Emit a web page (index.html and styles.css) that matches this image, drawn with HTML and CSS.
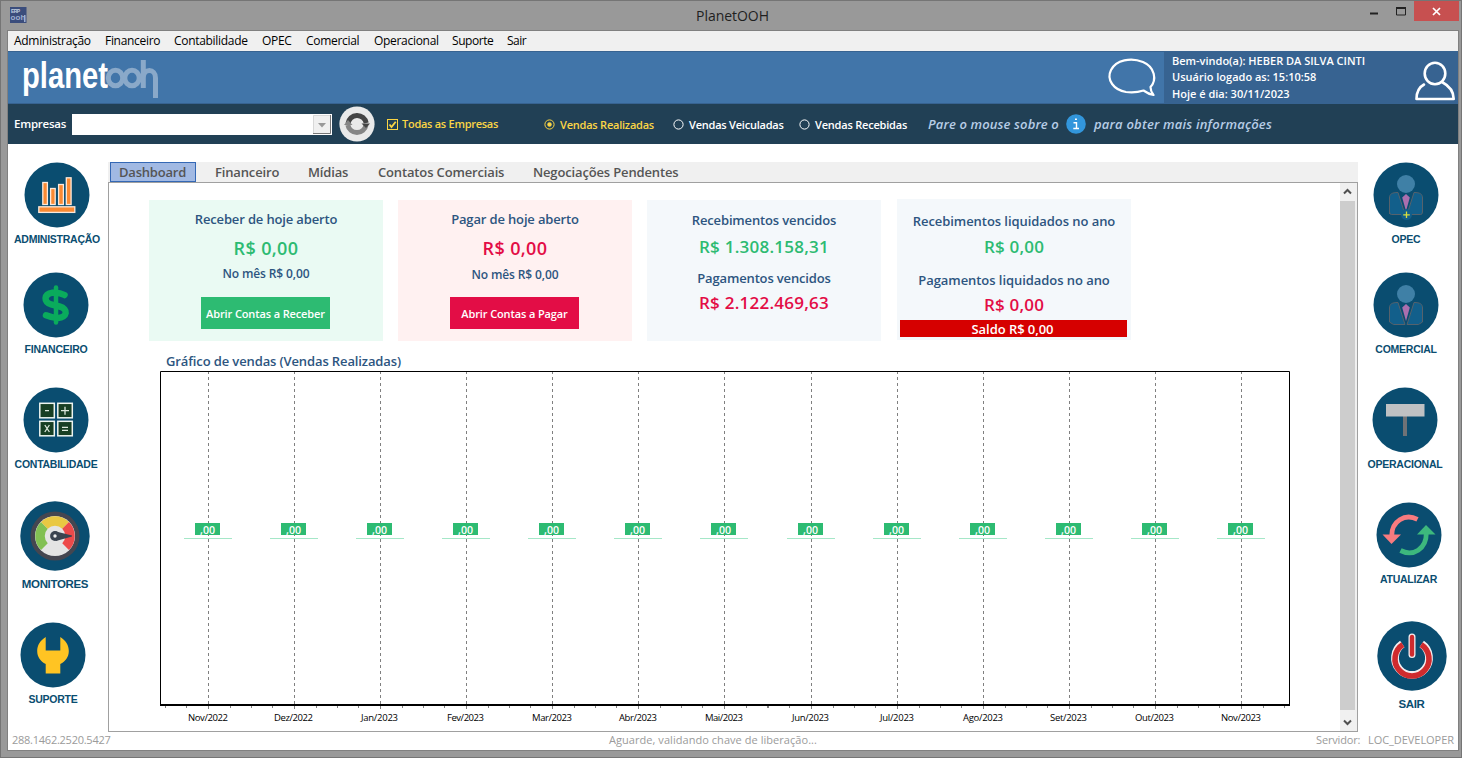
FILE: index.html
```html
<!DOCTYPE html>
<html lang="pt-BR">
<head>
<meta charset="utf-8">
<title>PlanetOOH</title>
<link rel="stylesheet" href="styles.css">
</head>
<body>
<div class="window">
  <header class="titlebar">
    <svg class="app-icon" width="17" height="16"><rect width="16.5" height="16" fill="#3b4d7c"/><text class="t-icon-top" x="1" y="6" textLength="9">ERP</text><text class="t-icon" x="0.5" y="12.5" textLength="15">ooh</text><rect x="14" y="8" width="1.5" height="7" fill="#9fb0d0"/></svg>
    <span class="title">PlanetOOH</span>
    <svg class="controls" width="90" height="21"><rect x="45" width="45" height="20" fill="#c75050"/><path d="M1 12.5h8" stroke="#222" stroke-width="2"/><path d="M27.5 7v7h9v-7" fill="none" stroke="#222"/><path d="M27 7h10" stroke="#222" stroke-width="2"/><path d="M64 7l7 7M71 7l-7 7" stroke="#fff" stroke-width="1.7"/></svg>
  </header>
  <div class="client">
    <nav class="menu"><span class="m1">Administração</span><span class="m2">Financeiro</span><span class="m3">Contabilidade</span><span class="m4">OPEC</span><span class="m5">Comercial</span><span class="m6">Operacional</span><span class="m7">Suporte</span><span class="m8">Sair</span></nav>
    <div class="brandbar">
      <svg class="logo" width="150" height="52"><text class="t-planet" x="14" y="35.5" textLength="86" lengthAdjust="spacingAndGlyphs">planet</text><g fill="none" stroke="#8aa9c9" stroke-width="5"><ellipse cx="107.5" cy="26" rx="7.2" ry="7.7"/><ellipse cx="124" cy="26" rx="7.2" ry="7.7"/><path d="M135.3 8v28M135.3 26c0-10 12.2-10 12.2 0v20"/></g></svg>
      <svg class="chat" width="52" height="48"><path d="M44.5 34C51 27 49 14 37 9C25 4 10 7 5 17C0 27 8 37 20 39C28 40 33 39 37.500 37.500C41 40 44 41.500 47.500 42C45.500 39.500 44.500 37 44.500 34Z" fill="none" stroke="#fff" stroke-width="2.200" stroke-linejoin="round"/></svg>
      <div class="user">
        <div class="user-text"><span class="u1">Bem-vindo(a): HEBER DA SILVA CINTI</span><span class="u2">Usuário logado as: 15:10:58</span><span class="u3">Hoje é dia: 30/11/2023</span></div>
        <svg width="44" height="48"><g fill="none" stroke="#fff" stroke-width="2.600" stroke-linecap="round" stroke-linejoin="round"><ellipse cx="22" cy="18.500" rx="10.300" ry="10.800"/><path d="M11 29.500C5.500 32.500 3.500 38 3.500 44H40.700C40.700 36.500 37.500 31.500 29 27"/></g></svg>
      </div>
    </div>
    <div class="filterbar">
      <span class="emp">Empresas</span>
      <div class="combo"><svg width="18" height="19"><rect width="18" height="19" fill="#f0f0f0"/><path d="M.5 18V.5H17" fill="none" stroke="#d8d8d8"/><path d="M0 18.500H17.500V0" fill="none" stroke="#777"/><path d="M5 8h8l-4 4.500z" fill="#999"/></svg></div>
      <svg class="reload" width="36" height="36"><circle cx="18" cy="18" r="17.600" fill="#e9e9e9"/><g fill="none" stroke-width="5"><path d="M9 17.500A9.200 9.200 0 0 1 27.200 17" stroke="#444"/><path d="M27 19A9.200 9.200 0 0 1 8.900 19" stroke="#858585"/></g><path d="M22.500 17.500H31L27 22Z" fill="#444"/><path d="M5 19H13.500L9 14Z" fill="#858585"/></svg>
      <svg class="check" width="11" height="11"><rect x=".5" y=".5" width="10" height="10" fill="none" stroke="#fad545"/><path d="M2.500 5.500L4.500 8L8.700 2.700" fill="none" stroke="#fad545" stroke-width="1.800"/></svg>
      <span class="todas">Todas as Empresas</span>
      <svg class="radio r1" width="11" height="11"><circle cx="5.500" cy="5.500" r="4.600" fill="none" stroke="#fad545"/><circle cx="5.500" cy="5.500" r="2.200" fill="#fad545"/></svg><span class="sale s1">Vendas Realizadas</span>
      <svg class="radio r2" width="11" height="11"><circle cx="5.500" cy="5.500" r="4.600" fill="none" stroke="#fff"/></svg><span class="sale s2">Vendas Veiculadas</span>
      <svg class="radio r3" width="11" height="11"><circle cx="5.500" cy="5.500" r="4.600" fill="none" stroke="#fff"/></svg><span class="sale s3">Vendas Recebidas</span>
      <span class="hint h1">Pare o mouse sobre o</span>
      <svg class="info" width="20" height="20"><circle cx="10" cy="10" r="9.800" fill="#3296dc"/><path d="M7.500 8.700H10.500V14.500M7.300 14.500H13M9 5.300H10.900" fill="none" stroke="#fff" stroke-width="1.400"/></svg>
      <span class="hint h2">para obter mais informações</span>
    </div>
    <div class="main">
      <aside class="side left">
        <div class="item i-adm"><svg width="66" height="66"><circle cx="33" cy="33" r="32.500"/><g fill="#fa8a33" stroke="#fbe9dc" stroke-width="1.300"><rect x="18.800" y="20.500" width="4.600" height="22"/><rect x="26.600" y="26.500" width="4.600" height="16"/><rect x="34.600" y="22.500" width="4.800" height="20"/><rect x="42.300" y="15.800" width="4.800" height="26.700"/><rect x="14.800" y="44.800" width="36" height="5.600"/></g></svg><b>ADMINISTRAÇÃO</b></div>
        <div class="item i-fin"><svg width="66" height="66"><circle cx="33" cy="33" r="32.500"/><g fill="none" stroke="#0aab5c" stroke-linecap="round"><path d="M41.500 23C37 20.500 33 20.500 29.500 20.800C20.500 22 20.500 30.500 28 32.300L36.500 34.500C46 37 44 45.500 35 46C30 46.300 27 45 23 43.300" stroke-width="6.500"/><path d="M33 15.500V50.500" stroke-width="4.500"/></g></svg><b>FINANCEIRO</b></div>
        <div class="item i-con"><svg width="66" height="66"><circle cx="33" cy="33" r="32.500"/><g fill="#173f24" stroke="#edf4f0" stroke-width="1.500"><rect x="16.800" y="16.300" width="14.500" height="14.500"/><rect x="34.800" y="16.300" width="14.500" height="14.500"/><rect x="16.800" y="34.300" width="14.500" height="14.500"/><rect x="34.800" y="34.300" width="14.500" height="14.500"/></g><path d="M22 23.700h4M38 23.700h8M42 19.700v8M21.800 38l4.600 7M26.400 38l-4.600 7M39 40.300h6M39 43.300h6" stroke="#dce8dd" stroke-width="1.300"/></svg><b>CONTABILIDADE</b></div>
        <div class="item i-mon"><svg width="70" height="70"><circle cx="35" cy="35" r="34.700"/><circle cx="35" cy="35" r="24.500" fill="#454650"/><circle cx="35" cy="35" r="20" fill="#e4e4e4"/><g fill="none" stroke-width="9.500"><path d="M24.400 45.600A15 15 0 0 1 24.400 24.400" stroke="#82c053"/><path d="M24.400 24.400A15 15 0 0 1 45.600 24.400" stroke="#e9c843"/><path d="M45.600 24.400A15 15 0 0 1 45.600 45.600" stroke="#ed4a4a"/></g><path d="M34 30L52 34.500V35.500L36 40Z" fill="#3b4450"/><circle cx="35" cy="35" r="4.900" fill="#3b4450"/><circle cx="35" cy="35" r="1.700" fill="#eee"/></svg><b>MONITORES</b></div>
        <div class="item i-sup"><svg width="66" height="66"><circle cx="33" cy="33" r="32.500"/><path d="M25.700 15V28.600H40.300V15C46 18.500 48.800 23.500 48.800 29C48.800 35 45.500 39.500 40.300 42V51.500H25.700V42C20.500 39.500 17.200 35 17.200 29C17.200 23.500 20 18.500 25.700 15Z" fill="#ffc423"/></svg><b>SUPORTE</b></div>
      </aside>
      <section class="center">
        <div class="tabs"><span class="tab on">Dashboard</span><span class="tab b2">Financeiro</span><span class="tab b3">Mídias</span><span class="tab b4">Contatos Comerciais</span><span class="tab b5">Negociações Pendentes</span></div>
        <div class="panel">
          <div class="content">
            <div class="cards">
              <div class="card green c1"><h2 class="lead">Receber de hoje aberto</h2><p class="value big pos">R$ 0,00</p><p class="month">No mês R$ 0,00</p><div class="button go">Abrir Contas a Receber</div></div>
              <div class="card red c2"><h2 class="lead">Pagar de hoje aberto</h2><p class="value big neg">R$ 0,00</p><p class="month">No mês R$ 0,00</p><div class="button pay">Abrir Contas a Pagar</div></div>
              <div class="card c3"><h2 class="lead">Recebimentos vencidos</h2><p class="value pos">R$ 1.308.158,31</p><h2 class="second">Pagamentos vencidos</h2><p class="value neg">R$ 2.122.469,63</p></div>
              <div class="card c4"><h2 class="lead">Recebimentos liquidados no ano</h2><p class="value pos wide">R$ 0,00</p><h2 class="second">Pagamentos liquidados no ano</h2><p class="value neg wide">R$ 0,00</p><div class="balance">Saldo R$ 0,00</div></div>
            </div>
            <h3 class="chart-title">Gráfico de vendas (Vendas Realizadas)</h3>
            <svg class="chart" width="1130" height="355">
              <defs>
                <g id="col"><path class="dash" d="M48.500 0V333"/><path class="tick" d="M48.500 335V338M5.500 335V337M26.500 335V337M70.500 335V337M91.500 335V337"/><path d="M24 167.500H72" stroke="#a5e7c8"/><rect x="35" y="152" width="25" height="12" fill="#2dbb72"/><text class="t-zero" x="40" y="163" textLength="15" lengthAdjust="spacingAndGlyphs">,00</text></g>
              </defs>
              <use href="#col"/><use href="#col" x="86"/><use href="#col" x="172"/><use href="#col" x="258"/><use href="#col" x="344"/><use href="#col" x="430"/><use href="#col" x="516"/><use href="#col" x="603"/><use href="#col" x="689"/><use href="#col" x="775"/><use href="#col" x="861"/><use href="#col" x="947"/><use href="#col" x="1033"/>
              <path d="M.5 334V.5H1129.500V334" fill="none" stroke="#000"/><path d="M0 334H1130" stroke="#000" stroke-width="2"/>
              <g class="t-month">
                <text x="28" y="350" textLength="40">Nov/2022</text><text x="114" y="350" textLength="39">Dez/2022</text><text x="201" y="350" textLength="37">Jan/2023</text><text x="287" y="350" textLength="37">Fev/2023</text><text x="372" y="350" textLength="40">Mar/2023</text><text x="459" y="350" textLength="38">Abr/2023</text><text x="545" y="350" textLength="38">Mai/2023</text><text x="632" y="350" textLength="37">Jun/2023</text><text x="720" y="350" textLength="34">Jul/2023</text><text x="803" y="350" textLength="40">Ago/2023</text><text x="890" y="350" textLength="37">Set/2023</text><text x="975" y="350" textLength="39">Out/2023</text><text x="1061" y="350" textLength="40">Nov/2023</text>
              </g>
            </svg>
          </div>
          <div class="scroll"><svg width="15" height="18"><path d="M4 10.500L7.500 7L11 10.500" fill="none" stroke="#505050" stroke-width="2"/></svg><div class="thumb"></div><svg width="15" height="21"><path d="M4 10.500L7.500 14L11 10.500" fill="none" stroke="#505050" stroke-width="2"/></svg></div>
        </div>
      </section>
      <aside class="side right">
        <div class="item j-ope"><svg width="66" height="66"><circle cx="33" cy="33" r="32.500"/><circle cx="33" cy="22" r="9" fill="#3f80a6"/><g fill="#125f8b" stroke="#56626c"><path d="M16.500 52V36C16.500 32 19 30.500 25 30.500L32 52.500H18.500Q16.500 52.500 16.500 50Z"/><path d="M49.500 50V36C49.500 32 47 30.500 41 30.500L34 52.500H47.500Q49.500 52.500 49.500 50Z"/></g><path d="M33 32L36.800 35.500L33 49L29.200 35.500Z" fill="#ab6fae"/><circle cx="33.500" cy="52.500" r="5.500" fill="#125f8b"/><path d="M33.500 49.500V56M30.200 52.800H36.800" stroke="#d8de3d" stroke-width="1.300"/></svg><b>OPEC</b></div>
        <div class="item j-com"><svg width="66" height="66"><circle cx="33" cy="33" r="32.500"/><circle cx="33" cy="22" r="9" fill="#3f80a6"/><g fill="#125f8b" stroke="#56626c"><path d="M16.500 50V36C16.500 32 19 30.500 25 30.500L32 52.500H20.500Z"/><path d="M49.500 50V36C49.500 32 47 30.500 41 30.500L34 52.500H45.500Z"/></g><path d="M33 32L36.800 35.500L33 49L29.200 35.500Z" fill="#ab6fae"/></svg><b>COMERCIAL</b></div>
        <div class="item j-ope2"><svg width="66" height="66"><circle cx="33" cy="33" r="32.500"/><rect x="31" y="29" width="4" height="20" fill="#6f7276"/><rect x="14" y="17" width="38.500" height="12.500" fill="#bfc1c3"/></svg><b>OPERACIONAL</b></div>
        <div class="item j-atu"><svg width="66" height="66"><circle cx="33" cy="33" r="32.500"/><g fill="none" stroke-width="4.800"><path d="M41.500 17.300C29 11 15.500 19 15.700 34" stroke="#f87b7f"/><path d="M24.500 48.500C37 55 50.500 47 50.300 31" stroke="#3db87d"/></g><path d="M6.500 32.500H25L15.500 42Z" fill="#f87b7f"/><path d="M41 32.500H59.500L50 23Z" fill="#3db87d"/></svg><b>ATUALIZAR</b></div>
        <div class="item j-sai"><svg width="70" height="70"><circle cx="35" cy="35" r="34.700"/><g fill="none" stroke-linecap="butt"><path d="M25.300 23A17 17 0 1 0 44.700 23" stroke="#f4eef0" stroke-width="7.800"/><path d="M25.800 23.700A17 17 0 1 0 44.200 23.700" stroke="#cf2b2e" stroke-width="5.600"/></g><rect x="31.500" y="12.500" width="7" height="24.500" rx="3.500" fill="#f4eef0"/><rect x="32.800" y="13.800" width="4.400" height="22" rx="2.200" fill="#cf2b2e"/></svg><b>SAIR</b></div>
      </aside>
    </div>
    <footer class="status"><span class="v1">288.1462.2520.5427</span><span class="v2">Aguarde, validando chave de liberação...</span><span class="v3">Servidor:</span><span class="v4">LOC_DEVELOPER</span></footer>
  </div>
</div>
</body>
</html>
```

FILE: styles.css
```css
* { box-sizing: border-box; }
body { margin: 0; font-family: "Open Sans", "Noto Sans", sans-serif; }
h2, h3, p { margin: 0; }
svg { display: block; flex: none; }
span, b, p, h2, h3 { white-space: nowrap; }

.window { width: 1462px; height: 758px; background: #999; border: 1px solid #757575; display: flex; flex-direction: column; }
.titlebar { height: 29px; display: flex; align-items: flex-start; padding: 0 2px 0 9px; }
.app-icon { margin-top: 6px; }
.title { width: 73px; margin-left: 669px; font-size: 14px; line-height: 29px; letter-spacing: -0.03px; color: #1f1f1f; }
.controls { margin-left: auto; }
.client { width: 1452px; height: 721px; margin-left: 6px; border: 1px solid #808080; background: #fff; display: flex; flex-direction: column; }

.menu { height: 20px; background: #f0f0f0; display: flex; gap: 14px; padding-left: 6px; font-size: 12px; line-height: 19px; letter-spacing: -0.3px; color: #000; }
.m1 { width: 77px; } .m2 { width: 55px; } .m3 { width: 74px; } .m4 { width: 30px; }
.m5 { width: 54px; } .m6 { width: 64px; } .m7 { width: 41px; letter-spacing: -0.45px; } .m8 { width: 20px; letter-spacing: -0.5px; }

.brandbar { height: 53px; background: #4175a9; border-top: 1px solid #376391; border-bottom: 1px solid #376391; display: flex; }
.chat { margin-left: 948px; margin-top: 1px; }
.user { margin: -1px 0 -1px auto; width: 294px; background: #376391; display: flex; justify-content: space-between; padding: 2px 1px 0 8px; }
.user svg { margin-top: 2px; }
.user-text { display: flex; flex-direction: column; font-size: 11px; font-weight: 600; line-height: 16.3px; color: #fff; }

.filterbar { height: 40px; background: #214055; display: flex; align-items: center; padding-left: 6px; color: #fff; font-size: 11px; font-weight: 600; }
.filterbar span { line-height: 18px; }
.emp { width: 58px; font-size: 11.5px; letter-spacing: -0.25px; }
.combo { width: 260px; height: 21px; background: #fff; display: flex; justify-content: flex-end; padding: 1px; }
.reload { margin-left: 7px; }
.check { margin-left: 12px; }
.todas { width: 96px; margin-left: 4px; color: #fad545; letter-spacing: -0.27px; }
.radio { margin-top: 1px; }
.r1 { margin-left: 46px; } .r2 { margin-left: 17px; } .r3 { margin-left: 14px; }
.sale { margin: 2px 0 0 5px; width: 96px; letter-spacing: -0.22px; }
.s1 { color: #fad545; } .s3 { letter-spacing: -0.2px; }
.hint { font-size: 13px; font-style: italic; color: #b7cde6; }
.h1 { margin-left: 17px; width: 138px; letter-spacing: 0.13px; }
.h2 { margin-left: 8px; letter-spacing: 0.2px; }

.main { height: 588px; display: flex; }
.side { display: grid; width: 100px; padding-top: 18px; color: #0a4d70; }
.left { grid-template-rows: 110px 115px 114px 121px 107px; }
.right { grid-template-rows: 110px 115px 115px 119px 107px; }
.item { display: flex; flex-direction: column; align-items: center; }
.item circle:first-child { fill: #0a4d70; }
.item b { font: 700 10.5px/14px "Liberation Sans", Arial, sans-serif; letter-spacing: -0.25px; margin-top: 4px; }
.i-adm { margin-left: -2px; } .i-fin, .i-con { margin-left: -4px; }
.i-mon { margin-left: -6px; } .i-sup { margin-left: -10px; }
.j-ope, .j-com { margin-left: -4px; } .j-ope2 { margin-left: -6px; }
.j-atu { margin-right: -1px; } .j-sai { margin-right: -7px; }
.i-mon b, .j-sai b { font-size: 11.5px; margin-top: 6px; letter-spacing: -0.35px; }
.i-sup b { margin-top: 4px; }

.center { width: 1250px; padding-top: 18px; }
.tabs { height: 20px; background: #f0f0f0; display: flex; padding-left: 2px; font-size: 13px; font-weight: 600; line-height: 20px; color: #555; letter-spacing: -0.15px; }
.tab.on { width: 86px; height: 20px; padding-left: 8px; line-height: 18px; background: #a1b9e3; border: 1px solid #3468b5; letter-spacing: -0.2px; }
.b2 { margin-left: 19px; width: 93px; } .b3 { width: 70px; } .b4 { width: 155px; }
.panel { height: 550px; border: 1px solid #a0a0a0; display: flex; }
.content { width: 1231px; padding: 16px 0 0 40px; }
.cards { display: flex; height: 142px; align-items: flex-start; gap: 15px; }
.card { width: 234px; height: 141px; margin-top: 1px; background: #f4f8fb; text-align: center; padding-top: 9px; }
.card.green { background: #eafaf3; } .card.red { background: #fff1f1; }
.lead, .second { font-size: 13px; font-weight: 600; line-height: 20px; color: #2d5580; letter-spacing: -0.15px; }
.value { font-size: 17px; font-weight: 600; line-height: 24px; letter-spacing: 0.24px; }
.big { margin-top: 7px; font-size: 18px; letter-spacing: 0.39px; }
.wide { letter-spacing: 0.2px; }
.pos { color: #2dbb72; } .neg { color: #e30d46; }
.month { margin-top: 6px; font-size: 12px; font-weight: 600; line-height: 16px; color: #2d5580; letter-spacing: -0.12px; }
.button { width: 129px; height: 32px; margin: 15px 0 0 52px; line-height: 34px; font-size: 11px; font-weight: 600; letter-spacing: -0.12px; color: #fff; white-space: nowrap; }
.go { background: #2dbb72; } .pay { background: #e30d46; }
.c2 .month { margin-top: 7px; } .c2 .button { margin-top: 14px; }
.c3 { padding-top: 10px; } .c3 .value { margin-top: 5px; } .c3 .second { margin-top: 9px; } .c3 .second + .value { margin-top: 3px; }
.c4 { margin: 0 0 0 1px; padding-top: 12px; }
.c4 .lead, .c4 .second { letter-spacing: -0.06px; }
.c4 .value { margin-top: 4px; } .c4 .second { margin-top: 11px; } .c4 .second + .value { margin-top: 3px; }
.balance { width: 227px; height: 17px; margin: 3px 0 0 3px; background: #d60000; color: #fff; font-size: 13px; font-weight: 600; line-height: 18px; letter-spacing: -0.05px; padding-right: 2px; }
.chart-title { margin: 11px 0 0 17px; font-size: 13px; font-weight: 600; line-height: 19px; color: #2d5580; letter-spacing: -0.12px; }
.chart { margin-left: 11px; }
.dash { stroke: #808080; stroke-dasharray: 3 3; }
.tick { stroke: #808080; fill: none; }
.t-zero { font-size: 11px; font-weight: 600; fill: #fff; }
.t-month text { font-size: 9.5px; fill: #000; }
.scroll { width: 17px; padding-right: 2px; background: #f0f0f0; display: flex; flex-direction: column; }
.thumb { flex: 1; background: #cdcdcd; }

.status { flex: 1; display: flex; padding: 0 4px; font-size: 11px; line-height: 16px; color: #9b9b9b; }
.v1 { width: 597px; letter-spacing: -0.25px; } .v2 { width: 707px; letter-spacing: 0.05px; }
.v3 { width: 52px; letter-spacing: -0.15px; } .v4 { letter-spacing: -0.05px; }

.t-planet { font: 700 37px "Liberation Sans", Arial, sans-serif; fill: #fff; }
.t-icon { font: 700 8px "Liberation Sans", Arial, sans-serif; fill: #9fb0d0; }
.t-icon-top { font: 700 5px "Liberation Sans", Arial, sans-serif; fill: #c3cde0; }
```
